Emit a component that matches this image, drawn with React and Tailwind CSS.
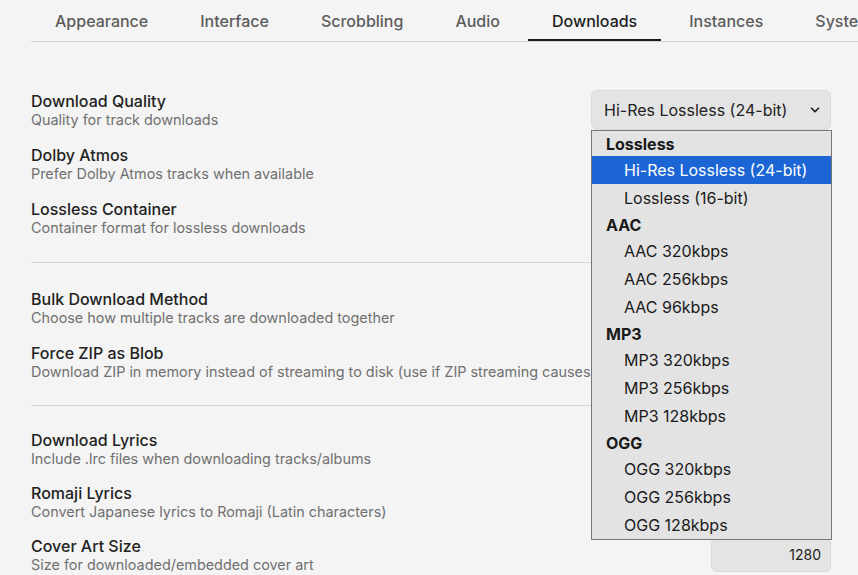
import { ChevronDown } from 'lucide-react'

const tabs = ['Appearance', 'Interface', 'Scrobbling', 'Audio', 'Downloads', 'Instances', 'System']

const qualityGroups = [
  { label: 'Lossless', options: ['Hi-Res Lossless (24-bit)', 'Lossless (16-bit)'] },
  { label: 'AAC', options: ['AAC 320kbps', 'AAC 256kbps', 'AAC 96kbps'] },
  { label: 'MP3', options: ['MP3 320kbps', 'MP3 256kbps', 'MP3 128kbps'] },
  { label: 'OGG', options: ['OGG 320kbps', 'OGG 256kbps', 'OGG 128kbps'] },
]

function SettingRow({ title, description, compact, children }) {
  return (
    <div className={`flex items-center justify-between ${compact ? 'h-[53px]' : 'h-[54px]'}`}>
      <div className="flex flex-col whitespace-nowrap">
        <span className="text-base leading-5 font-medium text-[#222]">{title}</span>
        <span className="text-[14.4px] leading-[17px] text-[#707070]">{description}</span>
      </div>
      {children}
    </div>
  )
}

function QualitySelect() {
  const selected = 'Hi-Res Lossless (24-bit)'
  return (
    <div className="relative mt-[2px] w-[240px] shrink-0">
      <div className="flex h-10 items-center justify-between rounded-md border border-[#dadada] bg-[#e4e4e4] pl-[12px] pr-[8px] text-base text-[#222]">
        <span>{selected}</span>
        <ChevronDown className="h-3.5 w-3.5 text-[#222]" strokeWidth={3} />
      </div>

      {/* Open option list */}
      <div className="absolute left-0 top-full z-10 w-[241px] border border-[#777] bg-[#e3e3e3] text-base text-[#1a1a1a]">
        {qualityGroups.map((group) => (
          <div key={group.label}>
            <div className="flex h-[25px] items-center pl-[14px] font-bold">{group.label}</div>
            {group.options.map((opt) => (
              <div
                key={opt}
                className={`flex h-[28px] items-center pl-[32px] ${
                  opt === selected ? 'bg-[#1b66d4] text-white' : ''
                }`}
              >
                {opt}
              </div>
            ))}
          </div>
        ))}
      </div>
    </div>
  )
}

export default function App() {
  return (
    <div className="h-[575px] w-full overflow-hidden bg-[#f4f4f4] font-['Inter',sans-serif]">
      {/* Tabs */}
      <div className="ml-[31px] flex gap-1 overflow-hidden whitespace-nowrap border-b border-[#d4d4d4]">
        {tabs.map((tab) => (
          <div
            key={tab}
            className={`border-b-2 px-6 pb-[7px] pt-[11px] text-base leading-[21px] font-medium ${
              tab === 'Downloads' ? 'border-[#1a1a1a] text-[#1e1e1e]' : 'border-transparent text-[#5c5c5c]'
            }`}
          >
            {tab}
          </div>
        ))}
      </div>

      <div className="pl-[31px] pr-[27px]">
        <div className="border-b border-[#d6d6d6] pb-[18px] pt-[40px]">
          <SettingRow title="Download Quality" description="Quality for track downloads">
            <QualitySelect />
          </SettingRow>
          <SettingRow title="Dolby Atmos" description="Prefer Dolby Atmos tracks when available" />
          <SettingRow title="Lossless Container" description="Container format for lossless downloads" />
        </div>

        <div className="border-b border-[#d6d6d6] pb-[17px] pt-[17px]">
          <SettingRow title="Bulk Download Method" description="Choose how multiple tracks are downloaded together" />
          <SettingRow
            title="Force ZIP as Blob"
            description="Download ZIP in memory instead of streaming to disk (use if ZIP streaming causes issues)"
          />
        </div>

        <div className="pt-4">
          <SettingRow compact title="Download Lyrics" description="Include .lrc files when downloading tracks/albums" />
          <SettingRow compact title="Romaji Lyrics" description="Convert Japanese lyrics to Romaji (Latin characters)" />
          <SettingRow compact title="Cover Art Size" description="Size for downloaded/embedded cover art">
            <div className="flex h-[34px] w-[120px] shrink-0 items-center justify-end rounded-md border border-[#dadada] bg-[#e4e4e4] pr-[9px] text-sm text-[#222]">
              1280
            </div>
          </SettingRow>
        </div>
      </div>
    </div>
  )
}
